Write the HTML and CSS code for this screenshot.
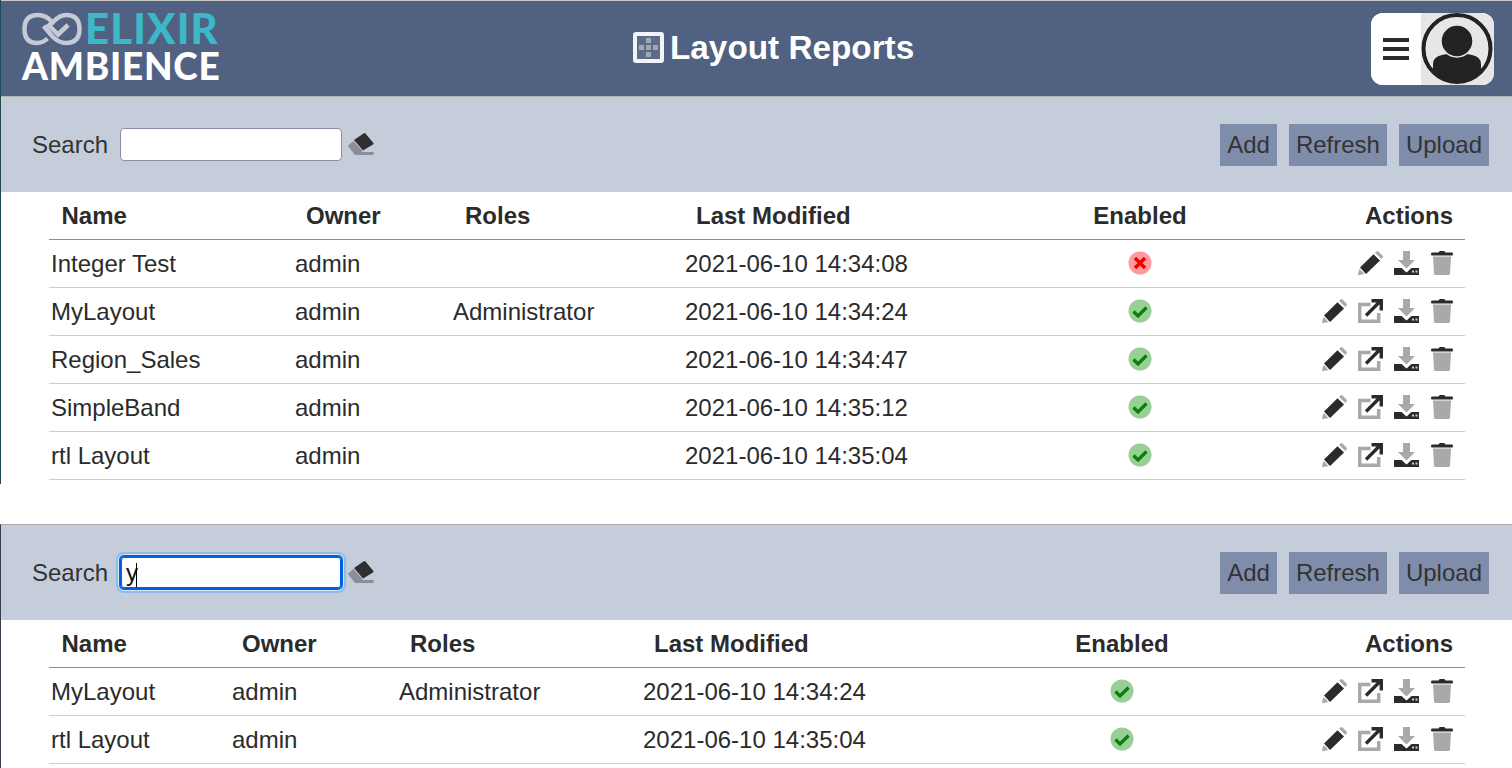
FILE: index.html
```html
<!DOCTYPE html>
<html lang="en">
<head>
<meta charset="utf-8">
<title>Layout Reports</title>
<link rel="stylesheet" href="styles.css">
</head>
<body>
<svg class="defs" aria-hidden="true">
  <symbol id="i-pencil" viewBox="0 0 25 24">
    <path fill="#2b2b2b" d="M2 16.500 15.500 3.200 22 9.500 8 23z"/>
    <path fill="#a9a9a9" d="M17 1.800 18.500.5q1-1 2 0L24.500 4.500q1 1 0 2L23.300 8zM1.500 18l5 5L1 24q-1.300.3-1-1z"/>
  </symbol>
  <symbol id="i-link" viewBox="0 0 25 24">
    <path fill="none" stroke="#a9a9a9" stroke-width="3.500" d="M12.500 5.500H1.700v16.800h19V14"/>
    <path fill="none" stroke="#2b2b2b" stroke-width="3.400" d="M8 16.500 21.500 3M13.500 1.700h9.800v9.800"/>
  </symbol>
  <symbol id="i-down" viewBox="0 0 25 24">
    <path fill="#a9a9a9" d="M9 0h7v9h5l-8.500 8.500L4 9h5z"/>
    <path fill="#2b2b2b" d="M0 17h7.500l5 4.500 5-4.500H25v7H0z"/>
    <path fill="#c5cddb" d="M18 19.500h2v2h-2zM21.500 19.500h2v2h-2z"/>
  </symbol>
  <symbol id="i-trash" viewBox="0 0 25 24">
    <path fill="#2b2b2b" d="M2 1.500h6.500Q9 0 10 0h4q1 0 1.500 1.500H22q1 0 1 1.500t-1 1.500H2q-1 0-1-1.500t1-1.500z"/>
    <path fill="#a9a9a9" d="M3 5.500h18l-1 17q-.1 1.500-1.500 1.500h-13Q4.100 24 4 22.500z"/>
  </symbol>
  <symbol id="i-ok" viewBox="0 0 24 24">
    <circle cx="12" cy="12" r="11.500" fill="#97cf97"/>
    <path fill="none" stroke="#0a800a" stroke-width="3.200" d="m5.500 12.500 4.500 4.500 8.500-8.500"/>
  </symbol>
  <symbol id="i-bad" viewBox="0 0 24 24">
    <circle cx="12" cy="12" r="11.500" fill="#ff9a9f"/>
    <path fill="none" stroke="#f00000" stroke-width="3.600" d="m7 7 10 10M17 7 7 17"/>
  </symbol>
  <symbol id="i-eraser" viewBox="0 0 26 24">
    <path fill="#2f2f2f" d="M6 7 15.500.6q1-1 2 0L25 9.500q1 1 0 2L15 17.500z"/>
    <path fill="#8c8f99" d="M5.500 8 14.500 18 11 22H7L.6 14q-1-1 0-2zM11 19h14.500v3H11z"/>
  </symbol>
</svg>

<section class="panel panel-first">
  <header class="topbar">
    <div class="logo">
      <div class="logo-top">
        <svg class="logo-mark" viewBox="0 0 60 34" aria-hidden="true">
          <path class="logo-line" d="M30.500 10.500Q24.500 3 16 3 2.500 3 2.500 17T15 31q6 0 10.500-4.500"/>
          <path class="logo-line" d="M21.500 14 31 25q6 6 13 6 13.500 0 13.500-14T44 3q-6.500 0-13.500 7.500L27 13.500l9 9 10-9.500"/>
        </svg>
        <span class="logo-elixir">ELIXIR</span>
      </div>
      <div class="logo-ambience">AMBIENCE</div>
    </div>
    <h1 class="title">
      <span class="title-icon" aria-hidden="true">
        <i class="dot dot-top"></i><i class="dot dot-left"></i><i class="dot dot-mid"></i><i class="dot dot-right"></i><i class="dot dot-bottom"></i>
      </span>
      Layout Reports
    </h1>
    <div class="user">
      <button class="burger" type="button" aria-label="Menu"><span></span><span></span><span></span></button>
      <div class="avatar">
        <svg viewBox="0 0 72 72" aria-hidden="true">
          <circle cx="36" cy="35.500" r="33.500" fill="#e6e6e6" stroke="#222" stroke-width="4"/>
          <path fill="#222" d="M12 58V51q0-7 9-9 4-1 7-1 8 4 16 0 3 0 7 1 9 2 9 9v7q-10 10-24 10T12 58z"/>
          <circle cx="36" cy="28" r="16" fill="#222" stroke="#e6e6e6" stroke-width="1.500"/>
        </svg>
      </div>
    </div>
  </header>
  <div class="toolbar">
    <label class="search-label" for="s1">Search</label>
    <input class="search" id="s1" type="text">
    <svg class="eraser"><use href="#i-eraser"/></svg>
    <div class="buttons">
      <button class="btn" type="button">Add</button>
      <button class="btn" type="button">Refresh</button>
      <button class="btn" type="button">Upload</button>
    </div>
  </div>
  <table class="grid grid-all">
    <thead>
      <tr><th class="c-name">Name</th><th class="c-owner">Owner</th><th class="c-roles">Roles</th><th class="c-mod">Last Modified</th><th class="c-en">Enabled</th><th class="c-act">Actions</th></tr>
    </thead>
    <tbody>
      <tr><td>Integer Test</td><td>admin</td><td></td><td>2021-06-10 14:34:08</td><td class="c-en"><svg class="status"><use href="#i-bad"/></svg></td>
        <td class="c-act"><div class="acts"><svg class="ic"><use href="#i-pencil"/></svg><svg class="ic"><use href="#i-down"/></svg><svg class="ic"><use href="#i-trash"/></svg></div></td></tr>
      <tr><td>MyLayout</td><td>admin</td><td>Administrator</td><td>2021-06-10 14:34:24</td><td class="c-en"><svg class="status"><use href="#i-ok"/></svg></td>
        <td class="c-act"><div class="acts"><svg class="ic"><use href="#i-pencil"/></svg><svg class="ic"><use href="#i-link"/></svg><svg class="ic"><use href="#i-down"/></svg><svg class="ic"><use href="#i-trash"/></svg></div></td></tr>
      <tr><td>Region_Sales</td><td>admin</td><td></td><td>2021-06-10 14:34:47</td><td class="c-en"><svg class="status"><use href="#i-ok"/></svg></td>
        <td class="c-act"><div class="acts"><svg class="ic"><use href="#i-pencil"/></svg><svg class="ic"><use href="#i-link"/></svg><svg class="ic"><use href="#i-down"/></svg><svg class="ic"><use href="#i-trash"/></svg></div></td></tr>
      <tr><td>SimpleBand</td><td>admin</td><td></td><td>2021-06-10 14:35:12</td><td class="c-en"><svg class="status"><use href="#i-ok"/></svg></td>
        <td class="c-act"><div class="acts"><svg class="ic"><use href="#i-pencil"/></svg><svg class="ic"><use href="#i-link"/></svg><svg class="ic"><use href="#i-down"/></svg><svg class="ic"><use href="#i-trash"/></svg></div></td></tr>
      <tr><td>rtl Layout</td><td>admin</td><td></td><td>2021-06-10 14:35:04</td><td class="c-en"><svg class="status"><use href="#i-ok"/></svg></td>
        <td class="c-act"><div class="acts"><svg class="ic"><use href="#i-pencil"/></svg><svg class="ic"><use href="#i-link"/></svg><svg class="ic"><use href="#i-down"/></svg><svg class="ic"><use href="#i-trash"/></svg></div></td></tr>
    </tbody>
  </table>
</section>

<section class="panel panel-second">
  <div class="toolbar">
    <span class="search-label">Search</span>
    <div class="search search-focus" role="textbox">y<span class="caret"></span></div>
    <svg class="eraser"><use href="#i-eraser"/></svg>
    <div class="buttons">
      <button class="btn" type="button">Add</button>
      <button class="btn" type="button">Refresh</button>
      <button class="btn" type="button">Upload</button>
    </div>
  </div>
  <table class="grid grid-filtered">
    <thead>
      <tr><th class="c-name">Name</th><th class="c-owner">Owner</th><th class="c-roles">Roles</th><th class="c-mod">Last Modified</th><th class="c-en">Enabled</th><th class="c-act">Actions</th></tr>
    </thead>
    <tbody>
      <tr><td>MyLayout</td><td>admin</td><td>Administrator</td><td>2021-06-10 14:34:24</td><td class="c-en"><svg class="status"><use href="#i-ok"/></svg></td>
        <td class="c-act"><div class="acts"><svg class="ic"><use href="#i-pencil"/></svg><svg class="ic"><use href="#i-link"/></svg><svg class="ic"><use href="#i-down"/></svg><svg class="ic"><use href="#i-trash"/></svg></div></td></tr>
      <tr><td>rtl Layout</td><td>admin</td><td></td><td>2021-06-10 14:35:04</td><td class="c-en"><svg class="status"><use href="#i-ok"/></svg></td>
        <td class="c-act"><div class="acts"><svg class="ic"><use href="#i-pencil"/></svg><svg class="ic"><use href="#i-link"/></svg><svg class="ic"><use href="#i-down"/></svg><svg class="ic"><use href="#i-trash"/></svg></div></td></tr>
    </tbody>
  </table>
</section>
</body>
</html>
```

FILE: styles.css
```css
* { box-sizing: border-box; }
html, body { margin: 0; height: 768px; overflow: hidden; background: #fff; }
body { font-family: "Liberation Sans", Arial, sans-serif; font-size: 24px; color: #2b2b2b; }
.defs { display: none; }

.panel { border-left: 1px solid #1f4a56; }
.panel-first { height: 484px; }
.panel-second { margin-top: 40px; height: 244px; border-left-color: #37404f; border-top: 1px solid #a8a8a8; }

.topbar {
  height: 96px;
  display: flex;
  align-items: flex-start;
  background: #506182;
  border-top: 1px solid #c9c9c9;
  padding-left: 21px;
  padding-right: 18px;
}
.logo { width: 198px; padding-top: 10px; font-family: Lato, sans-serif; font-weight: 900; }
.logo-top { display: flex; align-items: center; height: 35px; }
.logo-mark { width: 60px; height: 34px; margin-right: 3px; flex: none; }
.logo-line { fill: none; stroke: #c5cad6; stroke-width: 4.500px; }
.logo-elixir { font-size: 42px; line-height: 35px; color: #3db8c9; letter-spacing: 1.100px; }
.logo-ambience { font-size: 37px; color: #fff; margin-top: 3px; white-space: nowrap; line-height: 34px; letter-spacing: .75px; }

.title {
  margin: 28px 0 0 413px;
  display: flex;
  align-items: center;
  gap: 6px;
  font-size: 33.3px;
  line-height: 37px;
  font-weight: 700;
  color: #fff;
}
.title-icon {
  width: 31px;
  height: 31px;
  border: 4px solid #f2f3f6;
  border-radius: 3px;
  background: #5d6b8a;
  display: grid;
  grid-template-columns: repeat(3, 5px);
  grid-template-rows: repeat(3, 5px);
  gap: 2px;
  place-content: center;
}
.dot { background: #a2a7b4; display: block; width: 5px; height: 5px; }
.dot-top { grid-area: 1 / 2; }
.dot-left { grid-area: 2 / 1; }
.dot-mid { grid-area: 2 / 2; }
.dot-right { grid-area: 2 / 3; }
.dot-bottom { grid-area: 3 / 2; }

.user {
  margin: 12px 0 0 auto;
  width: 123px;
  height: 72px;
  display: flex;
  border-radius: 12px;
  overflow: hidden;
  background: #fff;
}
.burger {
  width: 50px;
  border: 0;
  background: #fff;
  padding: 0 0 0 12px;
  display: flex;
  flex-direction: column;
  justify-content: center;
  gap: 5px;
}
.burger span { display: block; width: 26px; height: 4px; background: #2b2b2b; }
.avatar { width: 73px; height: 72px; background: #e6e6e6; }
.avatar svg { display: block; width: 72px; height: 72px; }

.toolbar {
  height: 96px;
  background: #c5cddb;
  border-top: 1px solid #b5b5b5;
  display: flex;
  align-items: center;
  padding-left: 31px;
  padding-right: 23px;
}
.panel-second .toolbar { height: 95px; border-top: 0; }
.search-label { color: #333; margin-right: 12px; }
.search {
  width: 222px;
  height: 33px;
  border: 1px solid #8d8da3;
  border-radius: 4px;
  background: #fff;
  font: inherit;
  padding: 0 5px;
  line-height: 31px;
  display: block;
}
.search-focus {
  border-color: #0060df;
  box-shadow: inset 0 0 0 1px #0060df, 0 0 0 1px #0060df, 0 0 0 2px #d7e5f5, 0 0 0 4px #8fbbe6;
  color: #111;
}
.caret { display: inline-block; width: 1px; height: 24px; margin-left: -2px; background: #000; vertical-align: -6px; }
.eraser { width: 26px; height: 24px; margin-left: 6px; }
.buttons { margin-left: auto; display: flex; gap: 12px; }
.btn {
  height: 42px;
  border: 0;
  padding: 0 7px;
  background: #7f8dab;
  color: #333;
  font: inherit;
}

.grid {
  margin-left: 48px;
  width: 1416px;
  table-layout: fixed;
  border-collapse: separate;
  border-spacing: 0;
}
.grid th, .grid td { height: 48px; padding: 0 0 0 2px; text-align: left; white-space: nowrap; }
.grid th { padding-left: 13px; font-weight: 700; border-bottom: 1px solid #8e8e8e; }
.grid th.c-name { padding-left: 12.500px; }
.grid-all th.c-roles { padding-left: 14px; }
.grid-filtered th.c-owner { padding-left: 12px; }
.grid td { border-bottom: 1px solid #cfcfcf; }
.grid .c-en { text-align: center; padding-left: 0; }
.grid .c-act { text-align: right; padding: 0 12px 0 0; }
.grid td.c-act { padding-right: 10px; }
.grid-all .c-name { width: 244px; }
.grid-all .c-owner { width: 158px; }
.grid-all .c-roles { width: 232px; }
.grid-all .c-mod { width: 327px; }
.grid-all .c-en { width: 260px; }
.grid-filtered .c-name { width: 181px; }
.grid-filtered .c-owner { width: 167px; }
.grid-filtered .c-roles { width: 244px; }
.grid-filtered .c-mod { width: 333px; }
.grid-filtered .c-en { width: 296px; }

.status { width: 24px; height: 24px; display: block; margin: 0 auto; position: relative; top: -1px; }
.acts { display: flex; justify-content: flex-end; gap: 11px; position: relative; top: -1px; }
.ic { width: 25px; height: 24px; display: block; }
```
